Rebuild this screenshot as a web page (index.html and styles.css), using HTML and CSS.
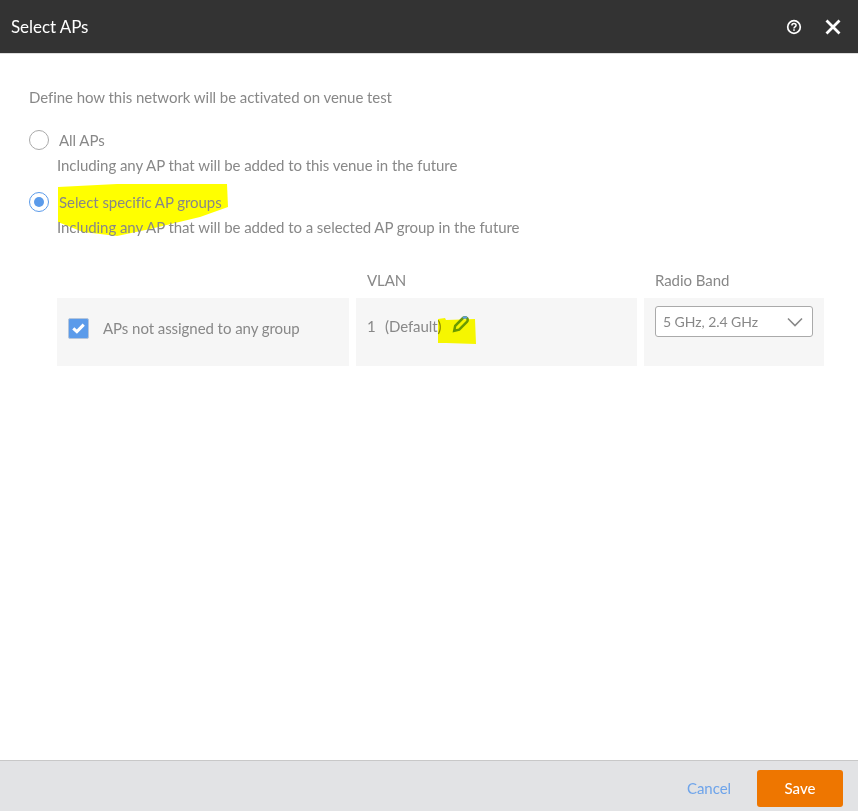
FILE: index.html
```html
<!DOCTYPE html>
<html lang="en">
<head>
    <meta charset="UTF-8">
    <title>Select APs</title>
    <link rel="stylesheet" href="styles.css">
</head>
<body>
    <div class="dialog">
        <header class="dialog-header">
            <h1>Select APs</h1>
            <div class="header-icons">
                <svg class="icon-help" viewBox="0 0 16 16" width="16" height="16">
                    <circle cx="8" cy="8" r="6.3" fill="none" stroke="#fff" stroke-width="1.7"/>
                    <path d="M5.9 6.4C5.9 5 6.9 4.5 8 4.5c1.2 0 2.1.7 2.1 1.8 0 1.6-2.1 1.6-2.1 3.1" fill="none" stroke="#fff" stroke-width="1.5"/>
                    <rect x="7.2" y="10.3" width="1.6" height="1.5" fill="#fff"/>
                </svg>
                <svg class="icon-close" viewBox="0 0 16 16" width="16" height="16">
                    <path d="M1.5 1.5l13 13M14.5 1.5l-13 13" fill="none" stroke="#fff" stroke-width="2.8"/>
                </svg>
            </div>
        </header>

        <main class="dialog-body">
            <p class="intro">Define how this network will be activated on venue test</p>

            <div class="option">
                <span class="radio"></span>
                <span class="option-label">All APs</span>
            </div>
            <p class="option-help">Including any AP that will be added to this venue in the future</p>

            <div class="option option-selected">
                <svg class="marker marker-option" viewBox="0 0 172 54" width="172" height="54">
                    <path d="M1 4L60 1L170 1L171 24L143 34L93 46L60 53L26 49L1 39Z" fill="#ffff00"/>
                </svg>
                <span class="radio radio-on"></span>
                <span class="option-label">Select specific AP groups</span>
            </div>
            <p class="option-help">Including any AP that will be added to a selected AP group in the future</p>

            <div class="group-table">
                <div class="col-head"></div>
                <div class="col-head">VLAN</div>
                <div class="col-head">Radio Band</div>

                <div class="cell cell-name">
                    <span class="checkbox">
                        <svg viewBox="0 0 20 20" width="20" height="20">
                            <path d="M4.500 10.300l3.800 3.500L15.500 6.500" fill="none" stroke="#fff" stroke-width="3.200"/>
                        </svg>
                    </span>
                    <span>APs not assigned to any group</span>
                </div>
                <div class="cell cell-vlan">
                    <span class="vlan-id">1</span>
                    <span>(Default)</span>
                    <span class="edit">
                        <svg class="marker marker-edit" viewBox="0 0 38 26" width="38" height="26">
                            <path d="M0 1l7-1 1 2 29-1 1 25-30-1-8 0z" fill="#ffff00"/>
                        </svg>
                        <svg class="icon-pencil" viewBox="0 0 18 18" width="18" height="18">
                            <path d="M2.200 15.800l1-5 7.800-7.800c1.100-1.100 2.900-1.100 3.900 0 1.100 1.100 1.100 2.800 0 3.900L7.200 14.700z" fill="none" stroke="#6a9a10" stroke-width="2.500"/>
                            <path d="M11 3c1.100-1.100 2.900-1.100 3.900 0" fill="none" stroke="#5b9bea" stroke-width="2"/>
                        </svg>
                    </span>
                </div>
                <div class="cell cell-band">
                    <div class="select">
                        <span>5 GHz, 2.4 GHz</span>
                        <svg viewBox="0 0 16 10" width="16" height="10">
                            <path d="M1 1.500l7 7 7-7" fill="none" stroke="#888" stroke-width="1.600"/>
                        </svg>
                    </div>
                </div>
            </div>
        </main>

        <footer class="dialog-footer">
            <a href="#" class="btn-cancel">Cancel</a>
            <button class="btn-save">Save</button>
        </footer>
    </div>
</body>
</html>
```

FILE: styles.css
```css
* {
    margin: 0;
    padding: 0;
    box-sizing: border-box;
}

body {
    font-family: 'Lato', 'Noto Sans', sans-serif;
    font-size: 15px;
    letter-spacing: -0.06px;
    color: #888;
    background: white;
}

.dialog {
    height: 811px;
    display: flex;
    flex-direction: column;
}

.dialog-header {
    height: 54px;
    background: #333;
    border-bottom: 1px solid #ddd;
    display: flex;
    align-items: center;
    justify-content: space-between;
    padding: 0 17px 0 11px;
}

.dialog-header h1 {
    color: white;
    font-size: 17px;
    font-weight: 400;
}

.header-icons {
    display: flex;
    align-items: center;
    gap: 23px;
}

.dialog-body {
    flex: 1;
    padding: 33px 34px 0 29px;
}

.intro {
    line-height: 20px;
    margin-bottom: 21px;
}

.option {
    position: relative;
    display: flex;
    align-items: center;
    gap: 10px;
    height: 24px;
}

.radio {
    position: relative;
    width: 20px;
    height: 20px;
    border: 1px solid #aaa;
    border-radius: 50%;
    background: white;
}

.radio-on {
    border-color: #5b9bea;
}

.radio-on::after {
    content: "";
    position: absolute;
    left: 4px;
    top: 4px;
    width: 10px;
    height: 10px;
    border-radius: 50%;
    background: #5b9bea;
}

.option-label {
    position: relative;
}

.marker {
    position: absolute;
    mix-blend-mode: multiply;
}

.marker-option {
    left: 28px;
    top: -7px;
}

.option-help {
    position: relative;
    line-height: 20px;
    margin: 3px 0 15px 28px;
}

.group-table {
    margin: 30px 0 0 28px;
    display: grid;
    grid-template-columns: 292px 281px 180px;
    grid-template-rows: 31px 68px;
    column-gap: 7px;
}

.col-head {
    padding: 3px 0 0 11px;
    line-height: 20px;
}

.col-head:last-of-type {
    padding-left: 12px;
}

.cell {
    background: #f6f6f6;
}

.cell-name {
    display: flex;
    align-items: center;
    gap: 14px;
    padding: 0 0 8px 11px;
}

.checkbox {
    width: 21px;
    height: 21px;
    background: #5b9bea;
    border: 1px solid #b5c6dc;
    border-radius: 2px;
    display: flex;
    align-items: center;
    justify-content: center;
}

.cell-vlan {
    display: flex;
    align-items: center;
    padding: 0 0 12px 11px;
}

.vlan-id {
    width: 18px;
}

.edit {
    position: relative;
    width: 18px;
    height: 18px;
    margin-left: 10px;
}

.marker-edit {
    left: -14px;
    top: 1px;
}

.icon-pencil {
    display: block;
    margin-top: -2px;
}

.cell-band {
    padding: 8px 11px 0;
}

.select {
    height: 31px;
    background: white;
    border: 1px solid #aaa;
    border-radius: 3px;
    display: flex;
    align-items: center;
    justify-content: space-between;
    padding: 0 9px 0 7px;
    font-size: 14px;
}

.dialog-footer {
    height: 51px;
    background: #e2e3e5;
    border-top: 1px solid #c8c8c8;
    display: flex;
    align-items: center;
    justify-content: flex-end;
    gap: 26px;
    padding: 4px 15px 0 0;
}

.btn-cancel {
    color: #6ea4ea;
    text-decoration: none;
}

.btn-save {
    width: 86px;
    height: 37px;
    background: #ee7600;
    color: white;
    border: none;
    border-radius: 3px;
    font-family: inherit;
    font-size: 15px;
    font-weight: 500;
}
```
